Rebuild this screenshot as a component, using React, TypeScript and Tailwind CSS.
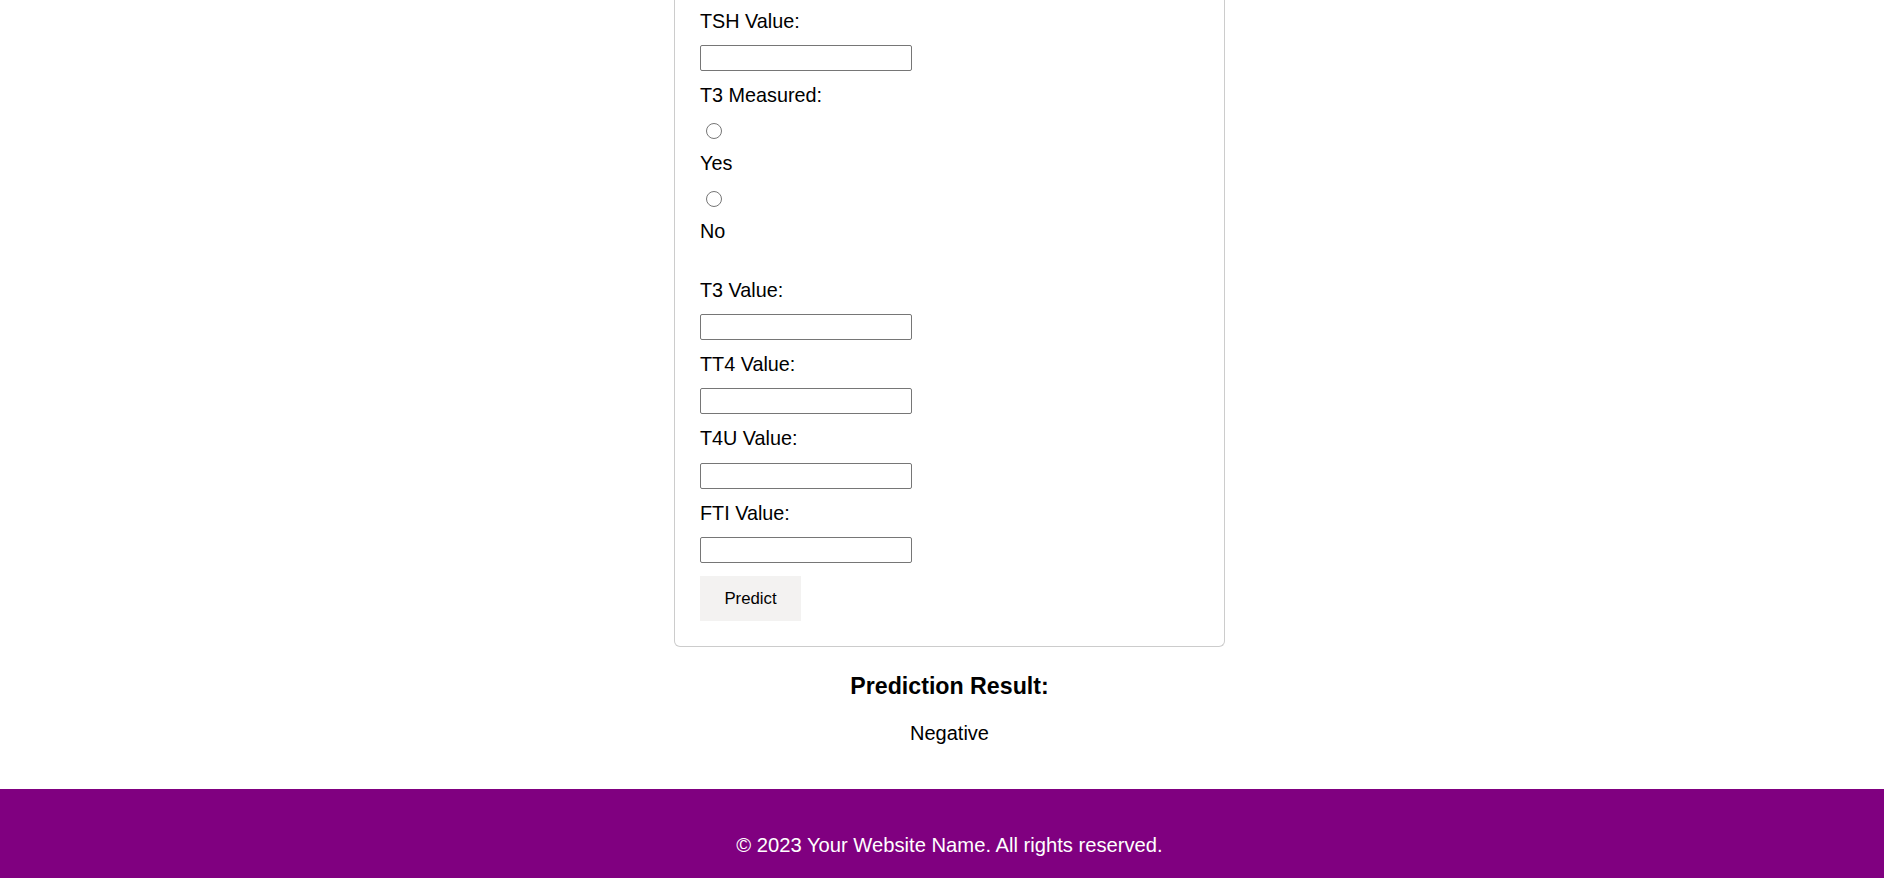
import React from 'react';

type FieldProps = { label: string; className?: string };

const Field: React.FC<FieldProps> = ({ label, className = '' }) => (
  <>
    <label className={`block leading-[22px] ${className}`}>{label}</label>
    <input
      type="text"
      className="w-[212px] h-[26px] border border-[#767676] rounded-[2px] bg-white px-1 outline-none"
    />
  </>
);

const App: React.FC = () => {
  return (
    <div className="h-screen overflow-hidden flex flex-col bg-white text-black text-[19.8px] font-['Liberation_Sans',Arial,sans-serif]">
      <main className="flex-1 flex flex-col items-center pl-[15px]">
        <form className="w-[551px] border-x border-b border-[#cccccc] rounded-b-[6px] pt-[9.8px] pb-[25px] px-[25px] flex flex-col items-start gap-[13.2px]">
          <Field label="TSH Value:" />

          <label className="block leading-[22px]">T3 Measured:</label>
          <input type="radio" name="t3" className="m-0 mt-[3.6px] ml-[6px] w-[16px] h-[16px]" />
          <label className="block leading-[22px]">Yes</label>
          <input type="radio" name="t3" className="m-0 mt-[3.6px] ml-[6px] w-[16px] h-[16px]" />
          <label className="block leading-[22px]">No</label>

          <Field label="T3 Value:" className="mt-[23.4px]" />
          <Field label="TT4 Value:" />
          <Field label="T4U Value:" />
          <Field label="FTI Value:" />

          <button
            type="button"
            className="w-[101px] h-[45px] bg-[#f3f2f1] text-[16.8px] text-black"
          >
            Predict
          </button>
        </form>

        <h3 className="mt-[25.5px] text-[23.2px] font-bold leading-[26px]">Prediction Result:</h3>
        <p className="mt-[23px] leading-[22px] text-[20px]">Negative</p>
      </main>

      <footer className="h-[88.6px] shrink-0 bg-[#800080] text-white text-[20.2px] pt-[44.6px] pl-[15px] text-center leading-[22px]">
        <p>© 2023 Your Website Name. All rights reserved.</p>
      </footer>
    </div>
  );
};

export default App;
